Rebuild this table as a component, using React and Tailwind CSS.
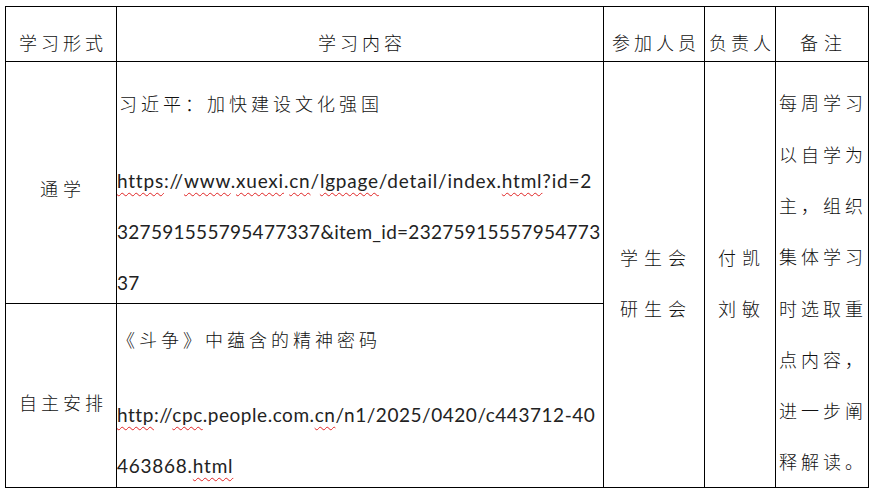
const zh = { fontFamily: '"Noto Sans CJK SC", "Noto Sans", sans-serif' };
const lat = { fontFamily: 'Lato, "Noto Sans CJK SC", sans-serif' };

const W = ({ children }) => (
  <span className="underline decoration-wavy decoration-[#e02424] decoration-1 underline-offset-[4px]">{children}</span>
);

const Zh = ({ children, className = '' }) => (
  <div style={zh} className={`shrink-0 text-[18px] font-light tracking-[4px] text-[#111] whitespace-nowrap ${className}`}>
    {children}
  </div>
);

const Url = ({ children, className = '' }) => (
  <div style={lat} className={`shrink-0 text-[19px] leading-[51px] text-[#222] whitespace-nowrap ${className}`}>
    {children}
  </div>
);

export default function App() {
  return (
    <div className="w-[873px] h-[490px] bg-white overflow-hidden">
      <div className="ml-[5px] mt-[6px] inline-grid grid-cols-[110px_486px_100px_70px_92px] grid-rows-[54px_241px_183px] gap-px bg-black p-px">
        {/* header */}
        <div className="bg-white flex items-center justify-center pt-[16px] pl-[4px]">
          <Zh>学习形式</Zh>
        </div>
        <div className="bg-white flex items-center justify-center pt-[16px] pl-[4px]">
          <Zh>学习内容</Zh>
        </div>
        <div className="bg-white flex items-center justify-center pt-[16px] pl-[4px]">
          <Zh>参加人员</Zh>
        </div>
        <div className="bg-white flex items-center justify-center pt-[16px] pl-[4px]">
          <Zh>负责人</Zh>
        </div>
        <div className="bg-white flex items-center justify-center pt-[16px] pl-[4px]">
          <Zh className="tracking-[6px]">备注</Zh>
        </div>

        {/* row 1 */}
        <div className="bg-white flex items-center justify-center pt-[12px] pl-[4px]">
          <Zh className="tracking-[5px]">通学</Zh>
        </div>
        <div className="bg-white flex flex-col pt-[16px] overflow-hidden">
          <Zh className="leading-[51px] pl-[2px]">习近平：加快建设文化强国</Zh>
          <div className="h-[26px] shrink-0" />
          <Url className="tracking-[0.79px]">
            <W>https</W>://<W>www</W>.<W>xuexi</W>.<W>cn</W>/<W>lgpage</W>/detail/index.<W>html</W>?id=2
          </Url>
          <Url className="tracking-[0.28px]">327591555795477337&amp;item_id=23275915557954773</Url>
          <Url className="tracking-[0.3px]">37</Url>
        </div>

        {/* merged columns */}
        <div className="bg-white row-span-2 col-start-3 row-start-2 flex flex-col items-center justify-center pt-[16px] pl-[4px]">
          <Zh className="leading-[51px] tracking-[6px]">学生会</Zh>
          <Zh className="leading-[51px] tracking-[6px]">研生会</Zh>
        </div>
        <div className="bg-white row-span-2 col-start-4 row-start-2 flex flex-col items-center justify-center pt-[16px] pl-[4px]">
          <Zh className="leading-[51px] tracking-[6px]">付凯</Zh>
          <Zh className="leading-[51px] tracking-[6px]">刘敏</Zh>
        </div>
        <div className="bg-white row-span-2 col-start-5 row-start-2 flex flex-col justify-center pt-[16px] pl-[3px]">
          {['每周学习', '以自学为', '主，组织', '集体学习', '时选取重', '点内容，', '进一步阐', '释解读。'].map((t) => (
            <Zh key={t} className="leading-[51.3px]">{t}</Zh>
          ))}
        </div>

        {/* row 2 */}
        <div className="bg-white col-start-1 row-start-3 flex items-center justify-center pt-[14px] pl-[4px]">
          <Zh>自主安排</Zh>
        </div>
        <div className="bg-white col-start-2 row-start-3 flex flex-col pt-[10px] overflow-hidden">
          <Zh className="leading-[51px]">《斗争》中蕴含的精神密码</Zh>
          <div className="h-[24px] shrink-0" />
          <Url className="tracking-[0.54px]">
            <W>http</W>://<W>cpc</W>.people.com.<W>cn</W>/n1/2025/0420/c443712-40
          </Url>
          <Url className="tracking-[0.75px]">
            463868.<W>html</W>
          </Url>
        </div>
      </div>
    </div>
  );
}
